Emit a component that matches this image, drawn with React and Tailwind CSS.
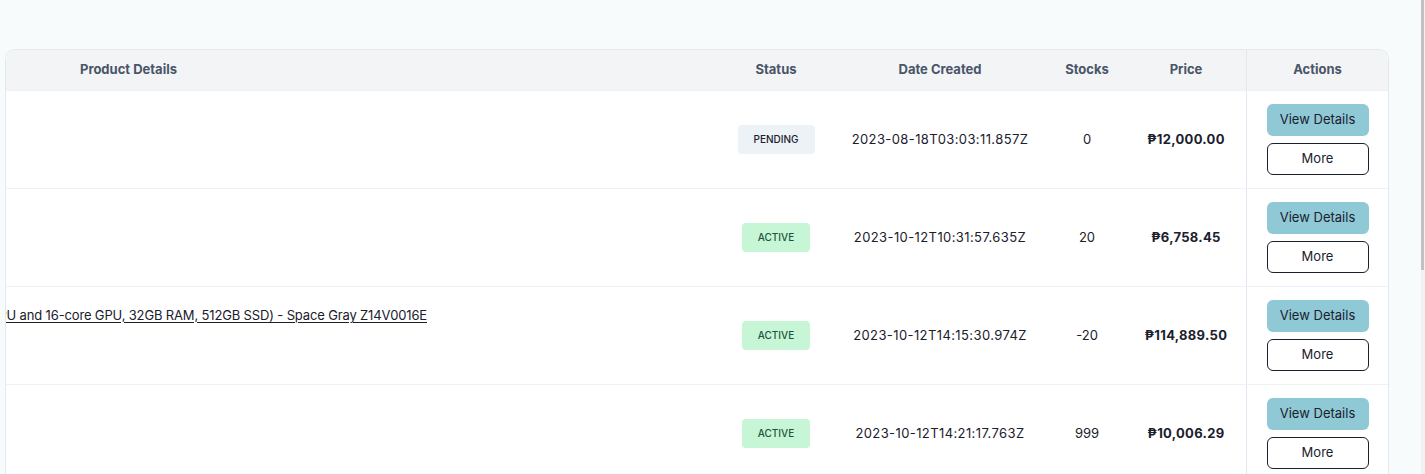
import React from "react";

const rows = [
  { title: "", status: "PENDING", date: "2023-08-18T03:03:11.857Z", stocks: "0", price: "₱12,000.00" },
  { title: "", status: "ACTIVE", date: "2023-10-12T10:31:57.635Z", stocks: "20", price: "₱6,758.45" },
  {
    title:
      "Apple MacBook Pro 14-inch (M2 Pro chip with 12-core CPU and 16-core GPU, 32GB RAM, 512GB SSD) - Space Gray Z14V0016E",
    status: "ACTIVE",
    date: "2023-10-12T14:15:30.974Z",
    stocks: "-20",
    price: "₱114,889.50",
  },
  { title: "", status: "ACTIVE", date: "2023-10-12T14:21:17.763Z", stocks: "999", price: "₱10,006.29" },
];

const cols = "grid grid-cols-[730px_80px_248px_46px_136px_142px]";

function StatusBadge({ status }) {
  const pending = status === "PENDING";
  return (
    <span
      className={`inline-flex h-[29px] items-center rounded px-4 text-[10px] font-medium ${
        pending ? "bg-[#edf2f7] text-[#1a202c]" : "bg-[#c6f6d5] text-[#22543d]"
      }`}
    >
      {status}
    </span>
  );
}

export default function App() {
  return (
    <div
      className="flex min-h-screen bg-[#f7fbfc] text-[#1a202c]"
      style={{ fontFamily: "Inter, 'Noto Sans', sans-serif" }}
    >
      <div className="flex-1 pl-[5px] pt-[49px]">
        <div className="w-[1384px] rounded-t-[10px] border border-b-0 border-[#e2e8f0] bg-white">
          {/* HEADER */}
          <div className={`${cols} h-[40px] items-stretch rounded-t-[10px] bg-[#f3f4f6] text-[13px] font-bold text-[#4a5568]`}>
            <div className="flex items-center pl-[74px]">Product Details</div>
            <div className="flex items-center justify-center">Status</div>
            <div className="flex items-center justify-center">Date Created</div>
            <div className="flex items-center justify-center">Stocks</div>
            <div className="flex items-center justify-center pl-4">Price</div>
            <div className="flex items-center justify-center border-l border-[#e2e8f0]">Actions</div>
          </div>

          {/* ROWS */}
          {rows.map((r, i) => (
            <div key={i} className={`${cols} border-t border-[#edf2f7] text-[13px]`}>
              <div className="flex items-center">
                {r.title && (
                  <div className="-mt-[40px] flex w-[421px] justify-end overflow-hidden whitespace-nowrap">
                    <a className="tracking-[-0.15px] text-[#1a202c] underline decoration-1 underline-offset-2">{r.title}</a>
                  </div>
                )}
              </div>
              <div className="flex items-center justify-center">
                <StatusBadge status={r.status} />
              </div>
              <div className="flex items-center justify-center tracking-[0.4px]">{r.date}</div>
              <div className="flex items-center justify-center">{r.stocks}</div>
              <div className="flex items-center justify-center pl-4 font-bold tracking-[0.3px]">{r.price}</div>
              <div className="flex flex-col items-center gap-[7px] border-l border-[#e2e8f0] py-[13px]">
                <button className="h-[32px] w-[102px] rounded-md bg-[#90c9d6] text-[13px] text-[#1a202c]">
                  View Details
                </button>
                <button className="h-[32px] w-[102px] rounded-md border border-[#1a202c] bg-white text-[13px] text-[#1a202c]">
                  More
                </button>
              </div>
            </div>
          ))}
        </div>
      </div>

      {/* SCROLLBAR */}
      <div className="flex w-[4px] flex-col bg-[#f1f1f1]">
        <div className="h-[270px] w-[3px] bg-[#c1c1c1]" />
      </div>
    </div>
  );
}
